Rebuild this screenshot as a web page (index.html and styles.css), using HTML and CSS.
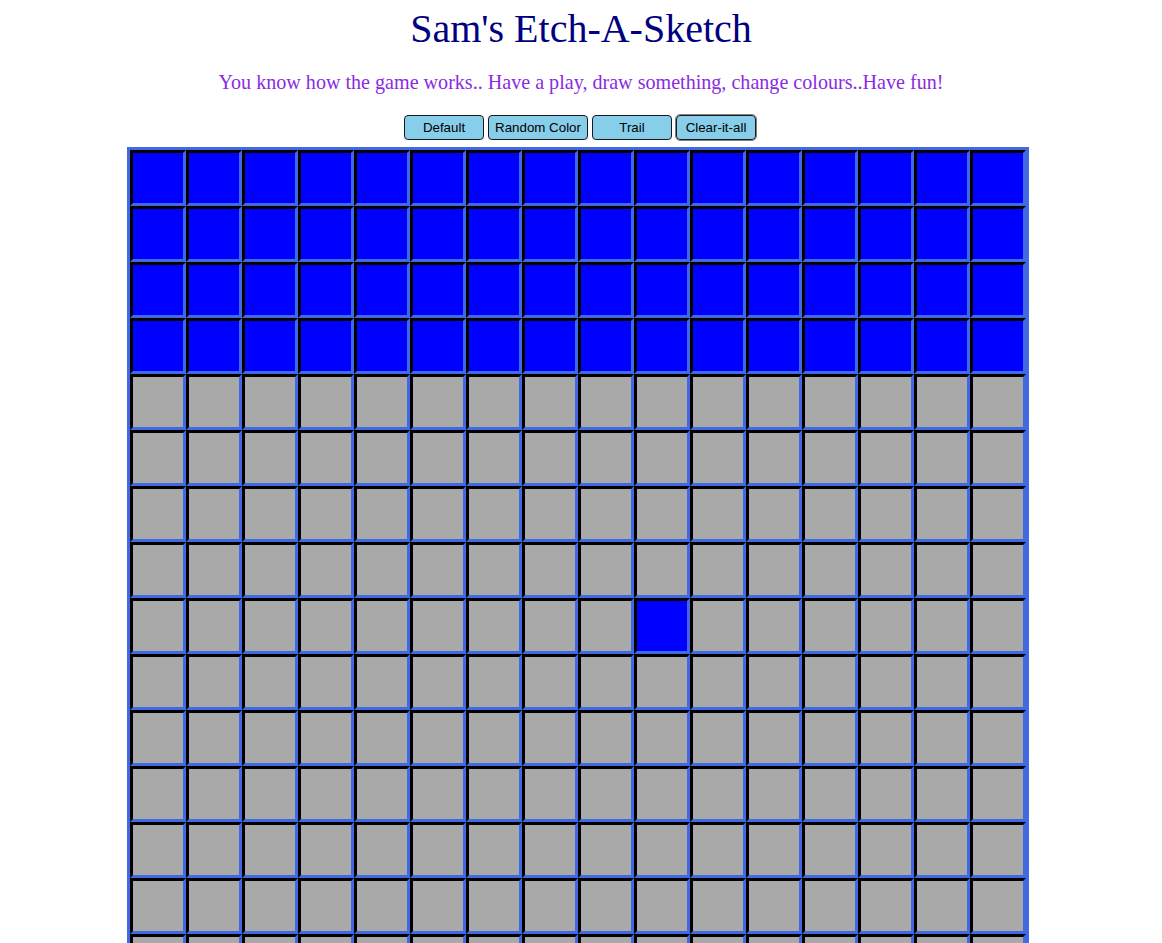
FILE: index.html
```html
<!DOCTYPE html>
<html lang="en">
<head>
<meta charset="utf-8">
<title>Sam's Etch-A-Sketch</title>
<link rel="stylesheet" href="styles.css">
</head>
<body>
<header class="header">
  <h1 class="title">Sam's Etch-A-Sketch</h1>
  <p class="subtitle">You know how the game works.. Have a play, draw something, change colours..Have fun!</p>
</header>
<div class="controls">
  <button class="btn btn-default">Default</button>
  <button class="btn btn-random">Random Color</button>
  <button class="btn btn-trail">Trail</button>
  <button class="btn btn-clear is-focused">Clear-it-all</button>
</div>
<div class="board-wrap">
  <div class="board" id="board"></div>
</div>
<script src="script.js"></script>
</body>
</html>
```

FILE: styles.css
```css
html, body {
  margin: 0;
  padding: 0;
  background: #ffffff;
}

body {
  font-family: "Liberation Serif", "Times New Roman", serif;
  display: flex;
  flex-direction: column;
  align-items: center;
  padding-top: 6px;
}

.header {
  display: flex;
  flex-direction: column;
  align-items: center;
  width: 100%;
}

.title {
  margin: 0;
  font-size: 40px;
  font-weight: normal;
  line-height: 46px;
  color: #000080;
  text-align: center;
}

.subtitle {
  margin: 19px 0 0 0;
  font-size: 20.1px;
  line-height: 23px;
  color: #8a2be2;
  text-align: center;
}

.controls {
  margin-top: 21px;
  padding-right: 2px;
  display: flex;
  gap: 4px;
  justify-content: center;
}

.btn {
  box-sizing: border-box;
  height: 25px;
  min-width: 80px;
  padding: 0 6px;
  font-family: "Liberation Sans", Arial, sans-serif;
  font-size: 13.333px;
  color: #000;
  background: #87ceeb;
  border: 1px solid #1a1a1a;
  border-radius: 4px;
}

.btn-random {
  width: 100px;
}

.is-focused {
  outline: 1px solid #808080;
}

.board-wrap {
  margin-top: 7px;
  width: 908px;
}

.board {
  width: 896px;
  border: 3px solid #4169e1;
  background: #4169e1;
  display: grid;
  grid-template-columns: repeat(16, 56px);
  grid-auto-rows: 56px;
}

.cell {
  box-sizing: border-box;
  width: 56px;
  height: 56px;
  background: #a9a9a9;
  border-top: 3px solid #000;
  border-left: 3px solid #000;
  border-right: 3px solid #4169e1;
  border-bottom: 3px solid #4169e1;
}

.cell.filled {
  background: #0000ff;
}
```

FILE: script.js
```js
(function () {
  var board = document.getElementById('board');
  for (var r = 0; r < 16; r++) {
    for (var c = 0; c < 16; c++) {
      var cell = document.createElement('div');
      cell.className = 'cell';
      if (r < 4 || (r === 8 && c === 9)) {
        cell.className += ' filled';
      }
      board.appendChild(cell);
    }
  }
})();
```
